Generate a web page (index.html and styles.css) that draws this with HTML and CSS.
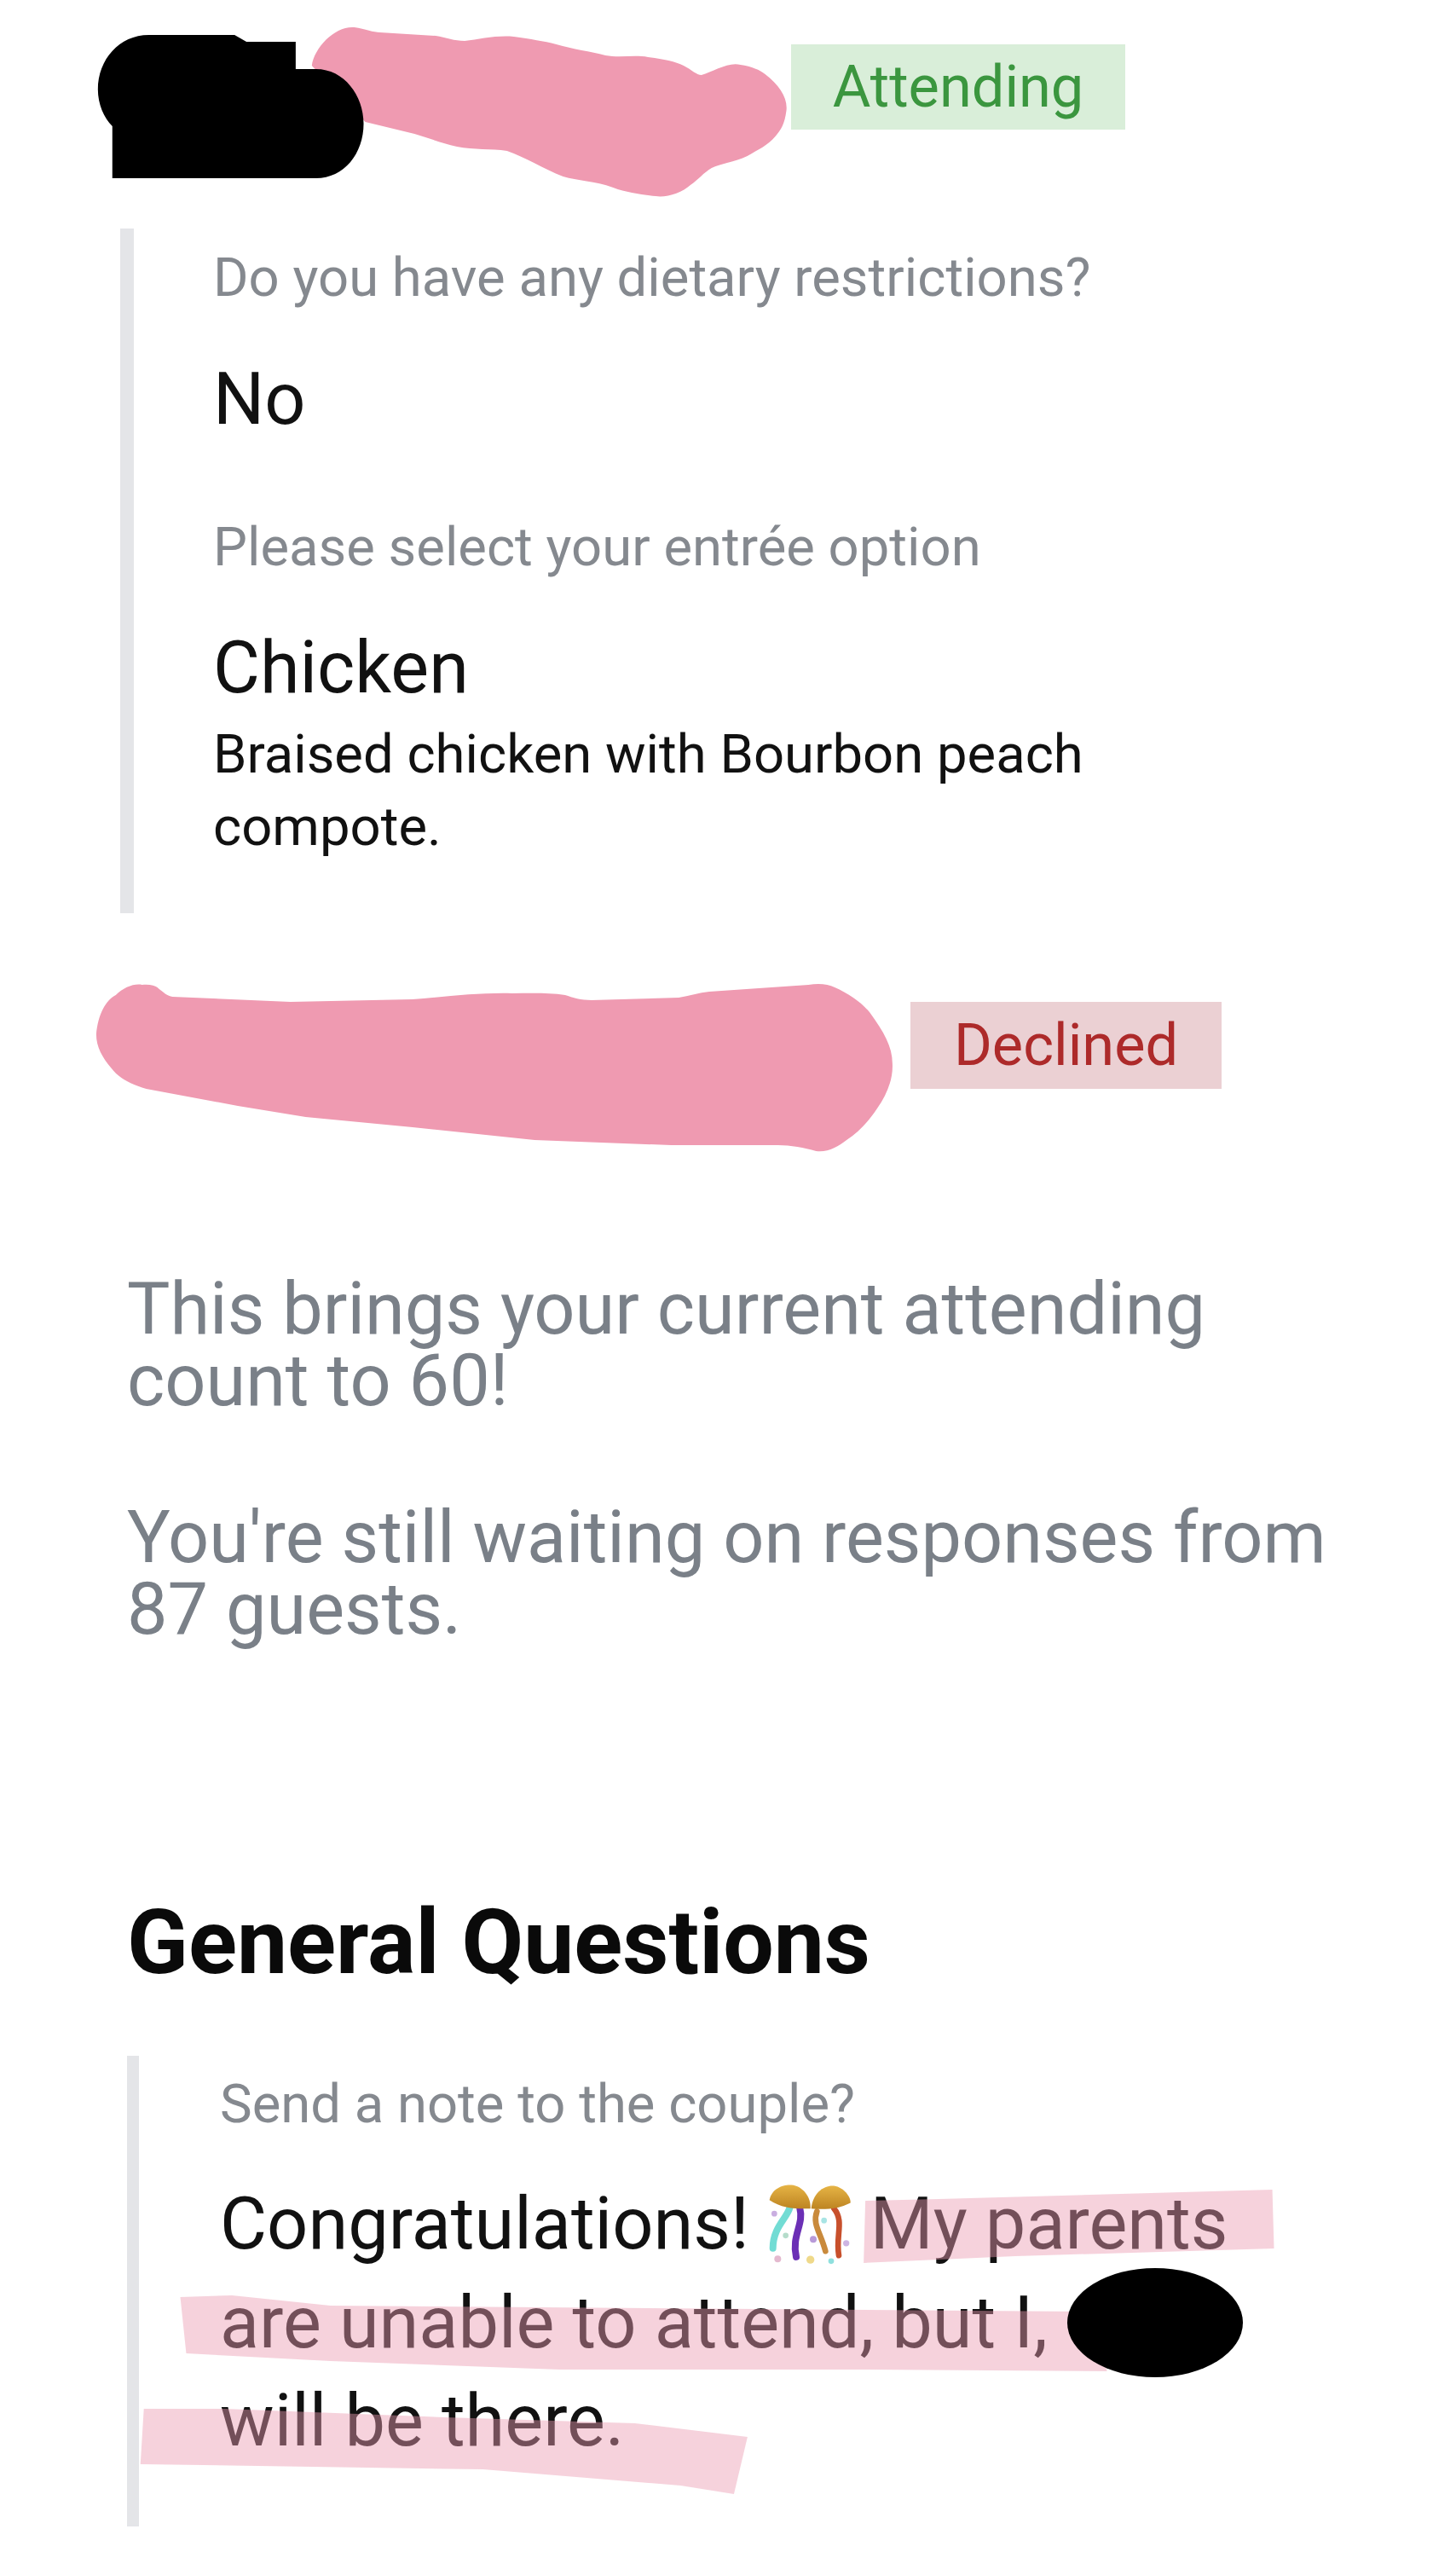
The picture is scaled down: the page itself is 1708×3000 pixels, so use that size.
FILE: index.html
```html
<!DOCTYPE html>
<html lang="en">
<head>
  <meta charset="UTF-8" />
  <title>RSVP details</title>
  <link rel="stylesheet" href="styles.css">
</head>
<body>
  <div class="page">
    <div class="guest-row">
      <div class="guest-name first"></div>
      <span class="badge attending">Attending</span>
    </div>

    <div class="answers">
      <div class="label">Do you have any dietary restrictions?</div>
      <div class="value">No</div>
      <div class="label entree">Please select your entrée option</div>
      <div class="value">Chicken</div>
      <div class="desc">Braised chicken with Bourbon peach<br>compote.</div>
    </div>

    <div class="guest-row second-row">
      <div class="guest-name second"></div>
      <span class="badge declined">Declined</span>
    </div>

    <div class="summary">
      <p>This brings your current attending<br>count to 60!</p>
      <p>You're still waiting on responses from<br>87 guests.</p>
    </div>

    <h1 class="section-title">General Questions</h1>

    <div class="note-block">
      <div class="label">Send a note to the couple?</div>
      <div class="note">
        Congratulations!
        <!-- party popper, no colour emoji font on the box -->
        <svg class="popper" viewBox="110 115 300 290">
          <defs>
            <linearGradient id="capFill" x1="0" y1="0" x2="0" y2="1">
              <stop offset="0" stop-color="#e6b445"/>
              <stop offset="1" stop-color="#bd8422"/>
            </linearGradient>
          </defs>
          <path d="M190 200C180 240 130 270 130 345" fill="none" stroke="#72dcd4" stroke-width="24" stroke-linecap="round"/>
          <path d="M225 205C240 260 195 300 212 375" fill="none" stroke="#6b2fb5" stroke-width="24" stroke-linecap="round"/>
          <path d="M285 215C268 260 298 290 315 355" fill="none" stroke="#c98a3c" stroke-width="20" stroke-linecap="round"/>
          <path d="M345 205C382 250 350 300 362 370" fill="none" stroke="#c8502c" stroke-width="20" stroke-linecap="round"/>
          <path d="M118 175C125 135 165 120 195 122C235 125 265 165 262 205C220 207 160 205 118 175Z" fill="url(#capFill)"/>
          <path d="M265 205C270 150 310 122 345 125C380 130 405 165 403 185C360 207 310 210 265 205Z" fill="url(#capFill)"/>
          <circle cx="135" cy="223" r="10" fill="#c9aee0"/>
          <circle cx="175" cy="300" r="10" fill="#b5dccb"/>
          <circle cx="272" cy="313" r="12" fill="#b89ad8"/>
          <circle cx="310" cy="247" r="10" fill="#a8e4e4"/>
          <circle cx="388" cy="327" r="11" fill="#cdb4e2"/>
          <circle cx="147" cy="382" r="12" fill="#e4b9cf"/>
          <circle cx="262" cy="385" r="14" fill="#efd98a"/>
          <circle cx="335" cy="390" r="10" fill="#8fe0de"/>
        </svg>
        My parents<br>are unable to attend, but I, C<br>will be there.
      </div>
    </div>

    <!-- marker scribbles drawn on top of the finished page -->
    <svg class="marks" viewBox="0 0 1708 3000">
      <g transform="translate(0.33 0) scale(0.9958 1)">
        <path class="scribble" d="M367 77C370 55 395 30 417 32C430 34 440 38 447 38L513 42C525 44 535 48 547 48C565 46 585 41 605 43C625 46 640 48 655 52C675 58 695 60 713 65C730 68 748 64 763 67C780 69 795 72 805 77C815 82 820 88 826 88C840 84 858 72 872 76C885 78 895 82 901 87C918 100 928 115 926 130C924 145 920 152 913 160C905 170 892 176 880 183C865 190 848 192 838 197C828 203 823 210 813 217C803 226 785 232 772 230C755 228 738 226 722 220C700 212 680 212 663 207C640 198 618 184 597 177C578 174 558 176 538 172C520 168 505 162 488 157L430 143Z"/>
        <path class="blackout" d="M115 105C115 70 140 41 175 41L276 41L290 49L348 49L348 81L372 81C405 81 428 112 428 145C428 180 405 209 372 209L132 209L132 148C122 138 115 122 115 105Z"/>
      </g>
      <g transform="translate(0.54 0) scale(0.9946 1)">
        <path class="scribble" d="M113 1213C115 1190 124 1173 136 1167C145 1158 158 1153 167 1155C176 1154 182 1156 185 1158C192 1164 197 1168 203 1169L342 1175L486 1172C525 1169 565 1164 603 1165C625 1165 645 1164 666 1167C675 1170 685 1173 697 1173L800 1170C812 1168 824 1164 836 1163L953 1155C965 1153 976 1154 984 1158C1000 1165 1015 1175 1025 1187C1042 1210 1052 1228 1052 1247C1053 1265 1046 1283 1034 1300C1024 1315 1012 1328 998 1337C988 1345 975 1352 962 1350C948 1346 932 1343 917 1343L791 1343L630 1337L486 1322L360 1310L280 1297L172 1277C155 1272 140 1265 131 1253C120 1240 113 1228 113 1213Z"/>
      </g>
      <g transform="translate(0.64 0) scale(0.9946 1)">
        <path class="marker" d="M1020 2581L1107 2579L1500 2568L1502 2637L1197 2646L1018 2654Z"/>
        <path class="marker" d="M212 2694L273 2692L389 2704L1287 2711L1305 2781L1018 2779L659 2779L389 2769L219 2760Z"/>
        <path class="marker" d="M169 2825L264 2825L524 2835L748 2842L881 2858L865 2925L802 2915L569 2896L165 2890Z"/>
      </g>
      <ellipse class="blackout" cx="1355" cy="2724" rx="103" ry="64"/>
    </svg>
  </div>
</body>
</html>
```

FILE: styles.css
```css
* { box-sizing: border-box; }

body {
  margin: 0;
  background: #ffffff;
  font-family: Roboto, "Liberation Sans", sans-serif;
  color: #111111;
}

.page {
  position: relative;
  width: 1708px;
  height: 3000px;
  padding-top: 52px;
  overflow: hidden;
}

.guest-row {
  display: flex;
  align-items: flex-start;
  padding-left: 115px;
}

.second-row { margin-top: 104px; }

.guest-name.first { width: 813px; }
.guest-name.second { width: 953px; }

.badge {
  height: 100px;
  line-height: 100px;
  text-align: center;
  font-size: 68.5px;
}

.attending {
  width: 392px;
  background: #d9eed9;
  color: #3b963f;
}

.declined {
  width: 365px;
  height: 102px;
  line-height: 102px;
  background: #ebd0d3;
  color: #ad2a2a;
}

.answers {
  margin: 116px 0 0 141px;
  padding: 22px 0 59px 93px;
  border-left: 16px solid #e4e5e8;
}

.label {
  font-size: 63.4px;
  line-height: 70px;
  color: #85898f;
}

.value {
  margin-top: 64px;
  font-size: 84.5px;
  line-height: 90px;
}

.label.entree { margin-top: 92px; }
.label.entree + .value { margin-top: 63px; }

.desc {
  margin-top: 13px;
  font-size: 63.4px;
  line-height: 85px;
}

.summary {
  margin: 217px 0 0 149px;
  font-size: 84.6px;
  line-height: 84px;
  color: #7a8088;
}

.summary p { margin: 0 0 100px 0; }
.summary p:last-child { margin-bottom: 0; }

.section-title {
  margin: 288px 0 0 149px;
  font-size: 105.5px;
  line-height: 120px;
  font-weight: 700;
  color: #0a0a0a;
}

.note-block {
  margin: 73px 0 0 149px;
  padding: 21px 0 65px 95px;
  border-left: 14px solid #e4e5e8;
}

.note {
  margin-top: 49px;
  font-size: 84.7px;
  line-height: 115.5px;
}

.popper {
  width: 100px;
  height: 97px;
  vertical-align: -20px;
}

.marks {
  position: absolute;
  top: 0;
  left: 0;
  width: 1708px;
  height: 3000px;
}

.scribble { fill: #ef9ab1; }
.marker { fill: #eb9bb1; opacity: 0.45; }
.blackout { fill: #000000; }
```
